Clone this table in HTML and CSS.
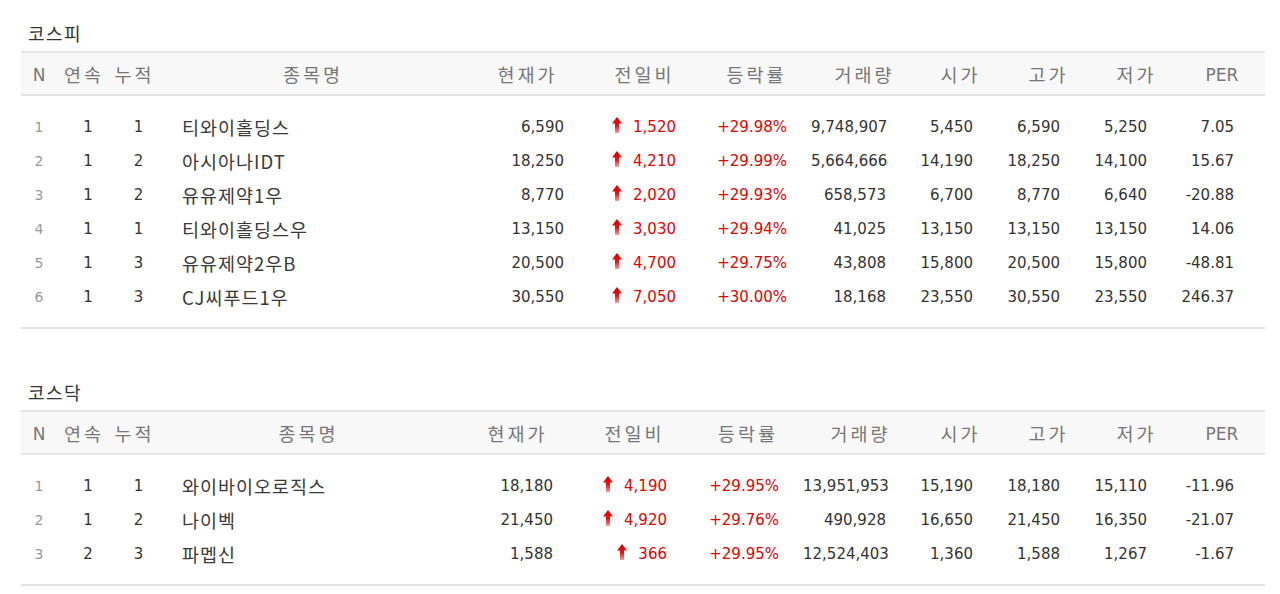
FILE: index.html
```html
<!DOCTYPE html>
<html lang="ko">
<head>
<meta charset="utf-8">
<title>상한가</title>
<link rel="stylesheet" href="styles.css">
</head>
<body>
<svg width="0" height="0" class="defs">
  <defs>
    <linearGradient id="upg" x1="0" y1="0" x2="0" y2="1">
      <stop offset="0" stop-color="#d40000"/>
      <stop offset="0.55" stop-color="#ee1010"/>
      <stop offset="1" stop-color="#ff9c9c"/>
    </linearGradient>
  </defs>
</svg>
<div class="page">
  <section class="market">
    <h2 class="title">코스피</h2>
    <table class="tbl kospi">
      <colgroup>
        <col class="c-n"><col class="c-a"><col class="c-b"><col class="c-name"><col class="c-cur"><col class="c-chg"><col class="c-rate"><col class="c-vol"><col class="c-o"><col class="c-h"><col class="c-l"><col class="c-per">
      </colgroup>
      <thead>
        <tr><th>N</th><th>연속</th><th>누적</th><th>종목명</th><th>현재가</th><th>전일비</th><th>등락률</th><th>거래량</th><th>시가</th><th>고가</th><th>저가</th><th>PER</th></tr>
      </thead>
      <tbody>
        <tr><td>1</td><td>1</td><td>1</td><td>티와이홀딩스</td><td>6,590</td><td><svg class="arr" viewBox="0 0 10 16"><polygon points="5,0 10,6.5 7,6.5 7,16 3,16 3,6.5 0,6.5" fill="url(#upg)"/></svg>1,520</td><td>+29.98%</td><td>9,748,907</td><td>5,450</td><td>6,590</td><td>5,250</td><td>7.05</td></tr>
        <tr><td>2</td><td>1</td><td>2</td><td>아시아나IDT</td><td>18,250</td><td><svg class="arr" viewBox="0 0 10 16"><polygon points="5,0 10,6.5 7,6.5 7,16 3,16 3,6.5 0,6.5" fill="url(#upg)"/></svg>4,210</td><td>+29.99%</td><td>5,664,666</td><td>14,190</td><td>18,250</td><td>14,100</td><td>15.67</td></tr>
        <tr><td>3</td><td>1</td><td>2</td><td>유유제약1우</td><td>8,770</td><td><svg class="arr" viewBox="0 0 10 16"><polygon points="5,0 10,6.5 7,6.5 7,16 3,16 3,6.5 0,6.5" fill="url(#upg)"/></svg>2,020</td><td>+29.93%</td><td>658,573</td><td>6,700</td><td>8,770</td><td>6,640</td><td>-20.88</td></tr>
        <tr><td>4</td><td>1</td><td>1</td><td>티와이홀딩스우</td><td>13,150</td><td><svg class="arr" viewBox="0 0 10 16"><polygon points="5,0 10,6.5 7,6.5 7,16 3,16 3,6.5 0,6.5" fill="url(#upg)"/></svg>3,030</td><td>+29.94%</td><td>41,025</td><td>13,150</td><td>13,150</td><td>13,150</td><td>14.06</td></tr>
        <tr><td>5</td><td>1</td><td>3</td><td>유유제약2우B</td><td>20,500</td><td><svg class="arr" viewBox="0 0 10 16"><polygon points="5,0 10,6.5 7,6.5 7,16 3,16 3,6.5 0,6.5" fill="url(#upg)"/></svg>4,700</td><td>+29.75%</td><td>43,808</td><td>15,800</td><td>20,500</td><td>15,800</td><td>-48.81</td></tr>
        <tr><td>6</td><td>1</td><td>3</td><td>CJ씨푸드1우</td><td>30,550</td><td><svg class="arr" viewBox="0 0 10 16"><polygon points="5,0 10,6.5 7,6.5 7,16 3,16 3,6.5 0,6.5" fill="url(#upg)"/></svg>7,050</td><td>+30.00%</td><td>18,168</td><td>23,550</td><td>30,550</td><td>23,550</td><td>246.37</td></tr>
      </tbody>
    </table>
  </section>
  <section class="market second">
    <h2 class="title">코스닥</h2>
    <table class="tbl kosdaq">
      <colgroup>
        <col class="c-n"><col class="c-a"><col class="c-b"><col class="c-name"><col class="c-cur"><col class="c-chg"><col class="c-rate"><col class="c-vol"><col class="c-o"><col class="c-h"><col class="c-l"><col class="c-per">
      </colgroup>
      <thead>
        <tr><th>N</th><th>연속</th><th>누적</th><th>종목명</th><th>현재가</th><th>전일비</th><th>등락률</th><th>거래량</th><th>시가</th><th>고가</th><th>저가</th><th>PER</th></tr>
      </thead>
      <tbody>
        <tr><td>1</td><td>1</td><td>1</td><td>와이바이오로직스</td><td>18,180</td><td><svg class="arr" viewBox="0 0 10 16"><polygon points="5,0 10,6.5 7,6.5 7,16 3,16 3,6.5 0,6.5" fill="url(#upg)"/></svg>4,190</td><td>+29.95%</td><td>13,951,953</td><td>15,190</td><td>18,180</td><td>15,110</td><td>-11.96</td></tr>
        <tr><td>2</td><td>1</td><td>2</td><td>나이벡</td><td>21,450</td><td><svg class="arr" viewBox="0 0 10 16"><polygon points="5,0 10,6.5 7,6.5 7,16 3,16 3,6.5 0,6.5" fill="url(#upg)"/></svg>4,920</td><td>+29.76%</td><td>490,928</td><td>16,650</td><td>21,450</td><td>16,350</td><td>-21.07</td></tr>
        <tr><td>3</td><td>2</td><td>3</td><td>파멥신</td><td>1,588</td><td><svg class="arr" viewBox="0 0 10 16"><polygon points="5,0 10,6.5 7,6.5 7,16 3,16 3,6.5 0,6.5" fill="url(#upg)"/></svg>366</td><td>+29.95%</td><td>12,524,403</td><td>1,360</td><td>1,588</td><td>1,267</td><td>-1.67</td></tr>
      </tbody>
    </table>
  </section>
</div>
</body>
</html>
```

FILE: styles.css
```css
html, body {
  margin: 0;
  padding: 0;
  background: #ffffff;
}

body {
  font-family: "DejaVu Sans", "Noto Sans CJK KR", sans-serif;
  color: #333333;
}

.defs {
  position: absolute;
  width: 0;
  height: 0;
}

.page {
  padding: 0 15px 0 21px;
}

.market {
  display: flex;
  flex-direction: column;
}

.title {
  margin: 21px 0 6px;
  padding-left: 7px;
  font-family: "Noto Sans CJK KR", "DejaVu Sans", sans-serif;
  font-size: 18px;
  font-weight: normal;
  letter-spacing: 1.5px;
  line-height: 24px;
  color: #333333;
}

.market.second .title {
  margin-top: 51px;
}

.tbl {
  width: 1244px;
  table-layout: fixed;
  border-collapse: collapse;
  border-top: 2px solid #e3e3e3;
  border-bottom: 2px solid #e3e3e3;
}

.tbl th {
  height: 41px;
  padding: 0 0 0 3px;
  background: #f8f8f8;
  border-bottom: 2px solid #e3e3e3;
  font-family: "Noto Sans CJK KR", "DejaVu Sans", sans-serif;
  font-size: 18.5px;
  font-weight: normal;
  line-height: 24px;
  letter-spacing: 3px;
  color: #777777;
  text-align: center;
  vertical-align: middle;
  white-space: nowrap;
}

.tbl th:first-child,
.tbl th:last-child {
  height: 38px;
  padding: 3px 0 0;
  font-family: "DejaVu Sans", sans-serif;
  font-size: 17px;
  letter-spacing: 0;
}

.tbl td {
  height: 34px;
  padding: 0;
  font-size: 15px;
  line-height: 34px;
  color: #333333;
  text-align: right;
  white-space: nowrap;
  vertical-align: middle;
}

.tbl tbody tr:first-child td {
  padding-top: 14px;
}

.tbl tbody tr:last-child td {
  padding-bottom: 13px;
}

/* column widths */
.c-n { width: 36px; }
.c-a { width: 51px; }
.c-b { width: 50px; }
.c-o, .c-h, .c-l { width: 88px; }
.c-per { width: 86px; }

.kospi .c-name { width: 307px; }
.kospi .c-cur { width: 122px; }
.kospi .c-chg { width: 112px; }
.kospi .c-rate { width: 112px; }
.kospi .c-vol { width: 104px; }

.kosdaq .c-name { width: 298px; }
.kosdaq .c-cur { width: 120px; }
.kosdaq .c-chg { width: 114px; }
.kosdaq .c-rate { width: 113px; }
.kosdaq .c-vol { width: 112px; }

/* cell alignment */
.tbl td:nth-child(1) {
  text-align: center;
  font-size: 14px;
  color: #999999;
}

.tbl td:nth-child(2),
.tbl td:nth-child(3) {
  text-align: center;
  padding-left: 11px;
}

.tbl td:nth-child(4) {
  text-align: left;
  padding-left: 24px;
  font-family: "Noto Sans CJK KR", "DejaVu Sans", sans-serif;
  font-size: 18.5px;
  letter-spacing: 1px;
  color: #3a3a3a;
}

.tbl td:nth-child(5) { padding-right: 23px; }
.tbl td:nth-child(6) { padding-right: 23px; color: #e60000; }
.tbl td:nth-child(7) { padding-right: 24px; color: #e60000; }
.tbl td:nth-child(8) { padding-right: 29px; }
.tbl td:nth-child(9) { padding-right: 30px; }
.tbl td:nth-child(10) { padding-right: 31px; }
.tbl td:nth-child(11) { padding-right: 32px; }
.tbl td:nth-child(12) { padding-right: 31px; }

.arr {
  display: inline-block;
  width: 10px;
  height: 16px;
  margin-right: 11px;
  vertical-align: -1px;
}
```
